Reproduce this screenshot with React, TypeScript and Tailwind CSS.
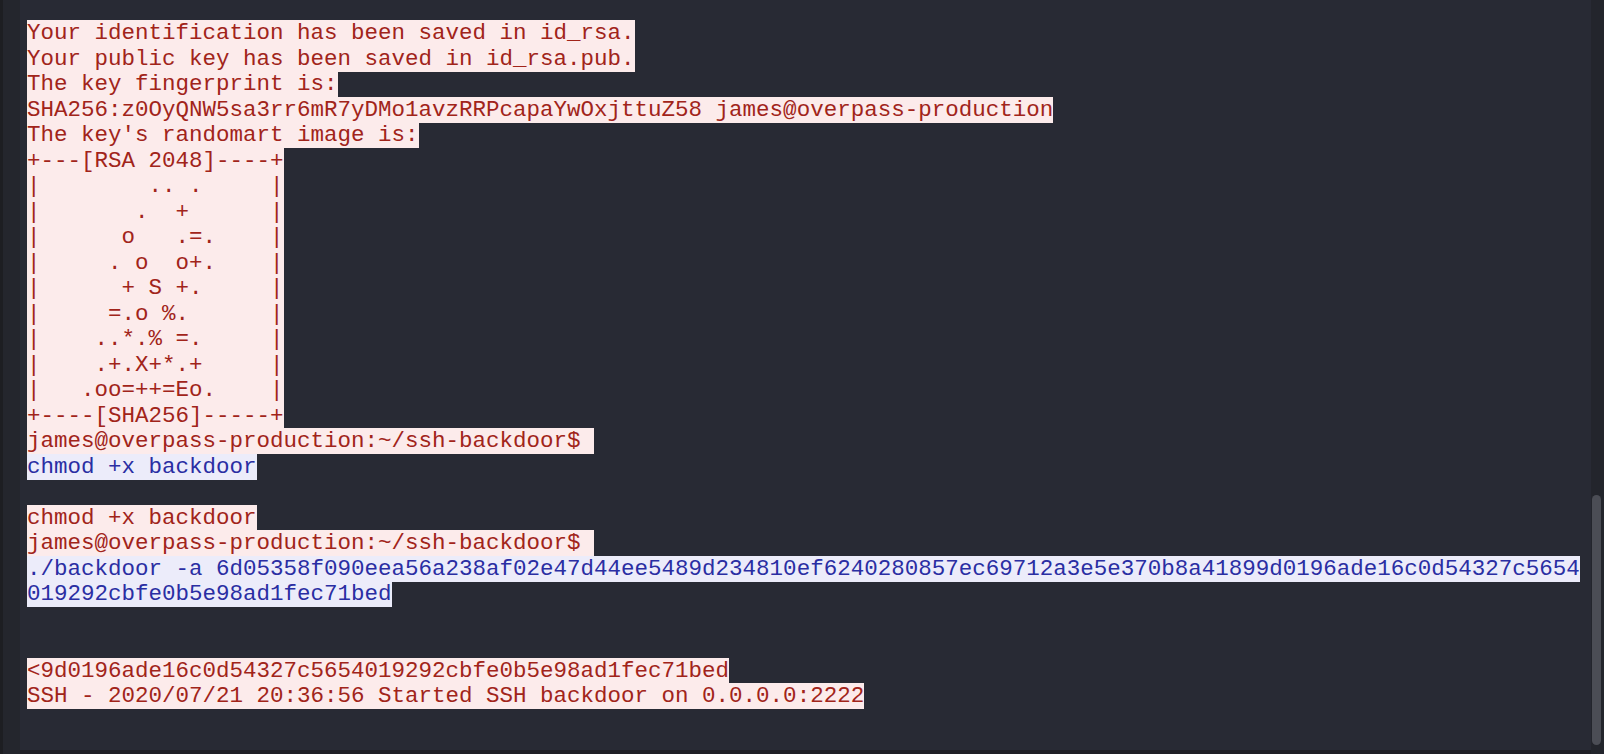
type Tone = "out" | "cmd" | "blank";

interface Line {
  tone: Tone;
  text: string;
}

const LINES: Line[] = [
  { tone: "out", text: "Your identification has been saved in id_rsa." },
  { tone: "out", text: "Your public key has been saved in id_rsa.pub." },
  { tone: "out", text: "The key fingerprint is:" },
  { tone: "out", text: "SHA256:z0OyQNW5sa3rr6mR7yDMo1avzRRPcapaYwOxjttuZ58 james@overpass-production" },
  { tone: "out", text: "The key's randomart image is:" },
  { tone: "out", text: "+---[RSA 2048]----+" },
  { tone: "out", text: "|        .. .     |" },
  { tone: "out", text: "|       .  +      |" },
  { tone: "out", text: "|      o   .=.    |" },
  { tone: "out", text: "|     . o  o+.    |" },
  { tone: "out", text: "|      + S +.     |" },
  { tone: "out", text: "|     =.o %.      |" },
  { tone: "out", text: "|    ..*.% =.     |" },
  { tone: "out", text: "|    .+.X+*.+     |" },
  { tone: "out", text: "|   .oo=++=Eo.    |" },
  { tone: "out", text: "+----[SHA256]-----+" },
  { tone: "out", text: "james@overpass-production:~/ssh-backdoor$ " },
  { tone: "cmd", text: "chmod +x backdoor" },
  { tone: "blank", text: "" },
  { tone: "out", text: "chmod +x backdoor" },
  { tone: "out", text: "james@overpass-production:~/ssh-backdoor$ " },
  {
    tone: "cmd",
    text: "./backdoor -a 6d05358f090eea56a238af02e47d44ee5489d234810ef6240280857ec69712a3e5e370b8a41899d0196ade16c0d54327c5654",
  },
  { tone: "cmd", text: "019292cbfe0b5e98ad1fec71bed" },
  { tone: "blank", text: "" },
  { tone: "blank", text: "" },
  { tone: "out", text: "<9d0196ade16c0d54327c5654019292cbfe0b5e98ad1fec71bed" },
  { tone: "out", text: "SSH - 2020/07/21 20:36:56 Started SSH backdoor on 0.0.0.0:2222" },
];

function TermLine({ line }: { line: Line }) {
  if (line.tone === "blank") return <div className="h-[25.5px]" />;
  const isCmd = line.tone === "cmd";
  return (
    <div className="h-[25.5px] whitespace-pre">
      <span
        className={
          isCmd
            ? "bg-[#ececfa] text-[#2a2ea3]"
            : "bg-[#fcebeb] text-[#a1241a]"
        }
      >
        {line.text}
      </span>
    </div>
  );
}

export default function App() {
  return (
    <div className="flex h-[754px] w-full overflow-hidden bg-[#282a34]">
      {/* left gutter */}
      <div className="w-[3px] shrink-0 bg-[#1d1e22]" />
      <div className="w-[17px] shrink-0 bg-[#24262d]" />

      {/* terminal output */}
      <div className="flex flex-1 flex-col border-b-[4px] border-[#1f2026]">
        <div className="flex-1 pl-[7px] pt-[21px] font-['Liberation_Mono',monospace] text-[22.5px] leading-[25.5px]">
          {LINES.map((line, i) => (
            <TermLine key={i} line={line} />
          ))}
        </div>
      </div>

      {/* scrollbar track */}
      <div className="flex w-[13px] shrink-0 flex-col bg-[#23252c] pb-[9px] pl-[1px] pr-[3px] pt-[495px]">
        <div className="flex-1 rounded-full bg-[#4b4d55]" />
      </div>
    </div>
  );
}
